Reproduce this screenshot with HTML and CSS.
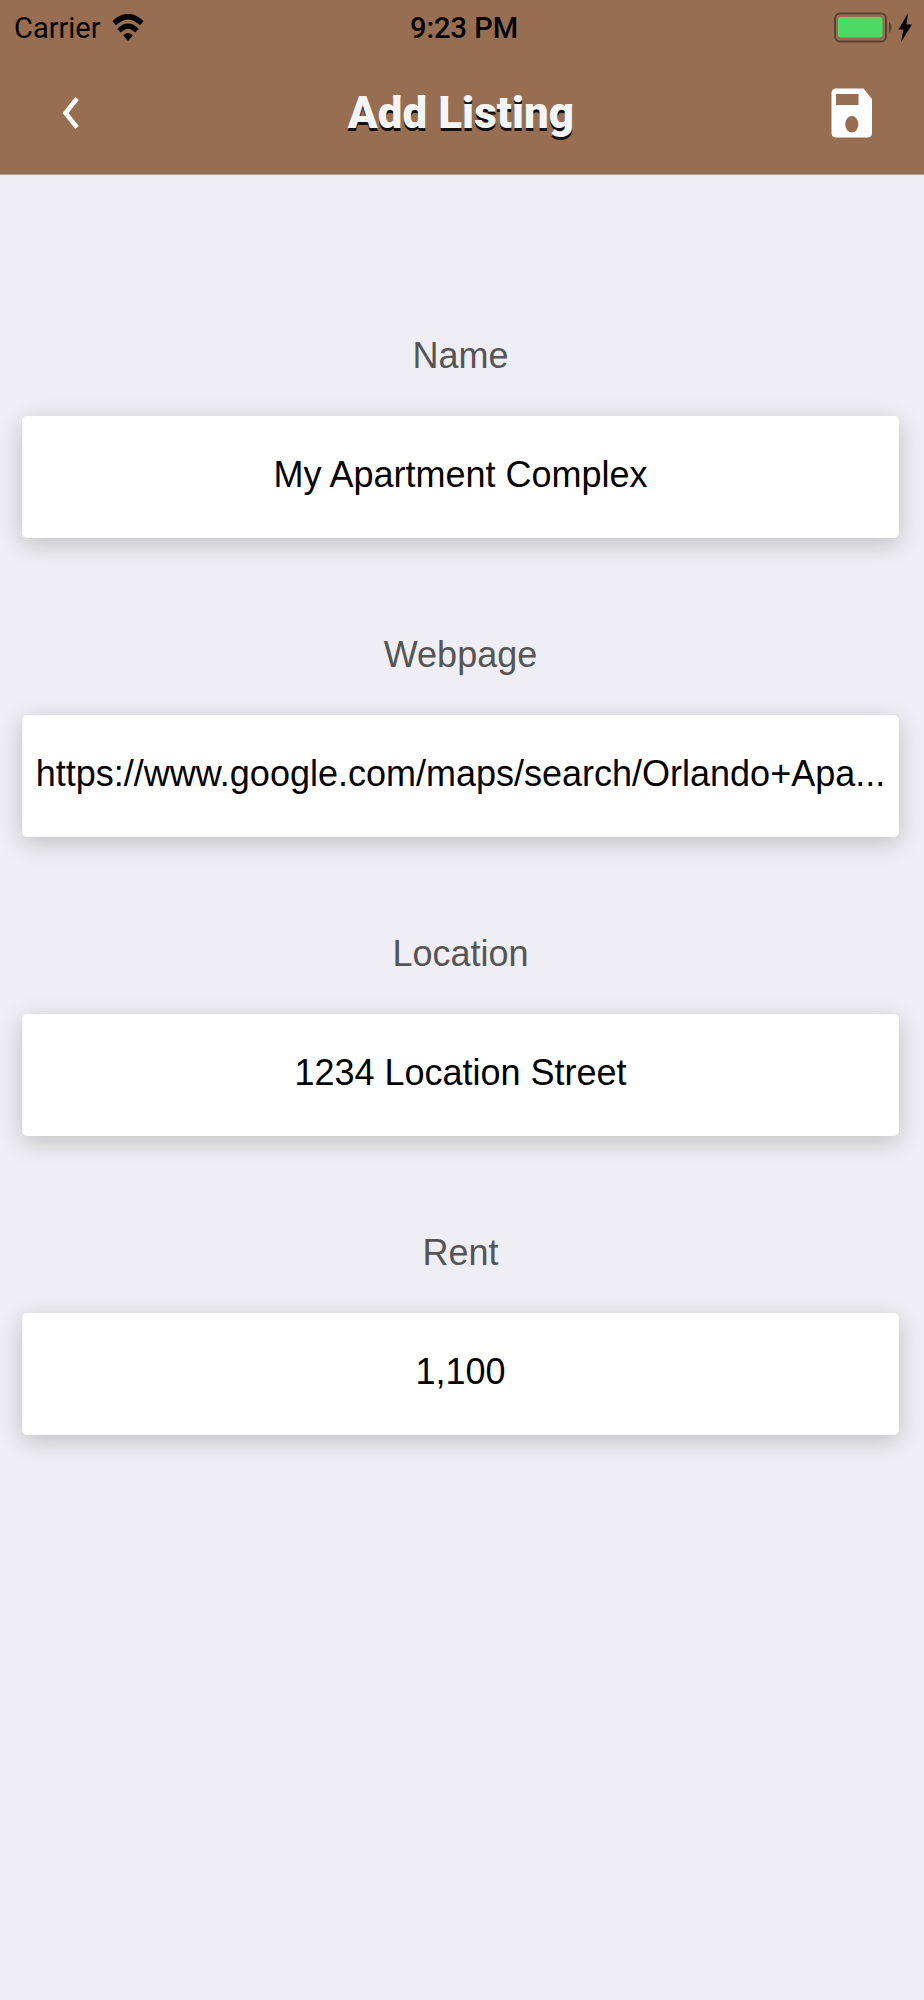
FILE: index.html
```html
<!DOCTYPE html>
<html lang="en">
<head>
<meta charset="utf-8">
<meta name="viewport" content="width=device-width, initial-scale=1">
<title>Add Listing</title>
<link rel="stylesheet" href="styles.css">
</head>
<body>
<header class="header">
  <div class="status">
    <div class="carrier">
      <span>Carrier</span>
      <svg class="wifi" viewBox="0 0 32 28" aria-hidden="true">
        <path d="M2.200 9.200Q16-3.800 29.800 9.200" fill="none" stroke="#000" stroke-width="5.500"/>
        <path d="M7 16.800Q16 7.600 25 16.800" fill="none" stroke="#000" stroke-width="5.200"/>
        <path d="M11.200 21.400Q16 16.800 20.800 21.400L16 27Z"/>
      </svg>
    </div>
    <time class="clock">9:23 PM</time>
    <svg class="battery" viewBox="0 0 80 32" aria-hidden="true">
      <rect x="1" y="1.500" width="51" height="28" rx="5" fill="none" stroke="#5c432f" stroke-width="2"/>
      <rect x="4" y="5" width="44.500" height="20.500" rx="3" fill="#4cd964"/>
      <path d="M55 10Q57.700 12 57.700 15.500T55 21Z" fill="#5c432f"/>
      <path d="M74 1L64.500 17.500H69.500L67 30L78 12.500H72.500Z"/>
    </svg>
  </div>
  <nav class="nav">
    <button class="icon-button back" type="button" aria-label="Back">
      <svg class="chevron" viewBox="0 0 18 34" aria-hidden="true"><path d="M15 2.500L3.500 17L15 31.500" fill="none" stroke="#fff" stroke-width="4.500"/></svg>
    </button>
    <h1 class="title">Add Listing</h1>
    <button class="icon-button save" type="submit" form="listing" aria-label="Save">
      <svg class="disk" viewBox="0 0 42 50" aria-hidden="true"><path fill="#fff" fill-rule="evenodd" d="M5 .5H32.500L41 11V44.500Q41 49.500 36.500 49.500H5Q.5 49.500 .5 44.500V5.500Q.5 .5 5 .5ZM5 6V17H27.500V6ZM20.800 28A6.600 8.300 0 1 0 20.800 44.600A6.600 8.300 0 1 0 20.800 28Z"/></svg>
    </button>
  </nav>
</header>
<main>
  <form class="form" id="listing">
    <div class="field"><label for="name">Name</label><input id="name" type="text" value="My Apartment Complex"></div>
    <div class="field"><label for="webpage">Webpage</label><input id="webpage" type="text" value="https://www.google.com/maps/search/Orlando+Apa..."></div>
    <div class="field"><label for="location">Location</label><input id="location" type="text" value="1234 Location Street"></div>
    <div class="field"><label for="rent">Rent</label><input id="rent" type="text" inputmode="decimal" value="1,100"></div>
  </form>
</main>
</body>
</html>
```
FILE: styles.css
```css
* { box-sizing: border-box; }

body {
  margin: 0;
  min-height: 100vh;
  background: #efeef4;
  color: #000;
  font-family: "Liberation Sans", Arial, sans-serif;
}

.header {
  background: #976e51;
  border-bottom: 1px solid #a9a3a5;
  font-family: Roboto, sans-serif;
}

.status {
  display: grid;
  grid-template-columns: 1fr auto 1fr;
  align-items: center;
  height: 56px;
  padding: 0 10px 0 14px;
  font-size: 29px;
}

.carrier {
  display: flex;
  align-items: center;
  gap: 11px;
}

.wifi { width: 32px; height: 28px; }
.clock { font-weight: 500; }
.battery { width: 80px; height: 32px; justify-self: end; }

.nav {
  display: grid;
  grid-template-columns: 142px 1fr 144px;
  align-items: center;
  height: 118px;
  padding-bottom: 4px;
}

.icon-button {
  display: flex;
  align-items: center;
  justify-content: center;
  height: 96px;
  padding: 0;
  border: 0;
  background: none;
}

.chevron { width: 18px; height: 34px; }
.disk { width: 42px; height: 50px; }

.title {
  margin: 0;
  color: #f5f5f5;
  font-size: 44px;
  font-weight: 900;
  line-height: 64px;
  text-align: center;
  text-shadow: 0 3px 0 #111;
}

.form {
  display: flex;
  flex-direction: column;
  gap: 89px;
  padding: 153px 25px 89px 22px;
}

.field {
  display: flex;
  flex-direction: column;
  gap: 32px;
}

.field label {
  color: #555;
  font-size: 36px;
  line-height: 56px;
  text-align: center;
}

.field input {
  width: 100%;
  height: 122px;
  padding: 0 4px 4px;
  border: 0;
  border-radius: 5px;
  background: #fff;
  box-shadow: 0 6px 24px rgba(0, 0, 0, 0.2);
  color: #000;
  font: inherit;
  font-size: 36px;
  text-align: center;
  text-overflow: ellipsis;
}
```
